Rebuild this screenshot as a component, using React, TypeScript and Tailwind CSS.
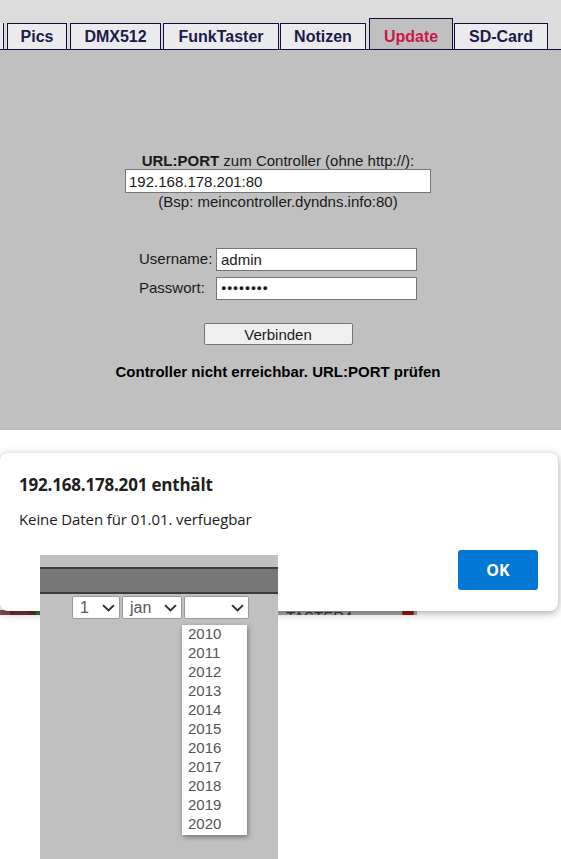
import React from "react";

const tabs = [
  { label: "Pics", w: 60, ml: 3 },
  { label: "DMX512", w: 91, ml: 3 },
  { label: "FunkTaster", w: 116, ml: 2 },
  { label: "Notizen", w: 86, ml: 1 },
  { label: "Update", w: 84, ml: 3, active: true },
  { label: "SD-Card", w: 94, ml: 1 },
];

const years = ["2010", "2011", "2012", "2013", "2014", "2015", "2016", "2017", "2018", "2019", "2020"];

function Chevron() {
  return (
    <svg width="13" height="8" viewBox="0 0 13 8" className="shrink-0">
      <path d="M1 1.2 L6.5 6.5 L12 1.2" fill="none" stroke="#2b2b2b" strokeWidth="1.8" />
    </svg>
  );
}

function Select({ value, w }: { value: string; w: number }) {
  return (
    <div
      className="h-[23px] bg-white border border-[#9a9a9a] rounded-[2px] flex items-center justify-between pl-[7px] pr-[4px] text-[16px] text-[#555]"
      style={{ width: w }}
    >
      <span className="leading-none">{value}</span>
      <Chevron />
    </div>
  );
}

export default function App() {
  return (
    <div className="relative w-[561px] h-[859px] overflow-hidden bg-white" style={{ fontFamily: '"Liberation Sans", Arial, sans-serif' }}>
      {/* Tab bar */}
      <div className="h-[50px] bg-[#dcdcdc] border-b border-[#10103a] flex items-end">
        <div className="w-[4px] h-[26px] bg-[#ebebee] border-r border-[#10103a]" />
        {tabs.map((t) => (
          <div
            key={t.label}
            className={
              t.active
                ? "h-[31px] bg-[#c0c0c0] border border-b-0 border-[#10103a] flex items-center justify-center pt-[5px] text-[16px] leading-[18px] font-bold text-[#c8174a]"
                : "h-[26px] bg-[#ebebee] border border-b-0 border-[#10103a] flex items-center justify-center text-[16px] leading-[18px] font-bold text-[#1b1b4b]"
            }
            style={{ width: t.w, marginLeft: t.ml }}
          >
            {t.label}
          </div>
        ))}
      </div>

      {/* Form */}
      <div className="h-[380px] bg-[#c0c0c0] flex flex-col items-center pt-[102px] pr-[5px] text-[15px] text-[#1a1a1a]">
        <div className="leading-[17px]">
          <b>URL:PORT</b> zum Controller (ohne http://):
        </div>
        <div className="w-[306px] h-[24px] bg-white border border-[#767676] flex items-center px-[3px] leading-none">
          192.168.178.201:80
        </div>
        <div className="leading-[17px]">(Bsp: meincontroller.dyndns.info:80)</div>

        <div className="mt-[38px] flex flex-col gap-[6px] w-[278px]">
          <div className="flex items-center">
            <span className="w-[77px]">Username:</span>
            <div className="w-[201px] h-[23px] bg-white border border-[#767676] flex items-center px-[4px] leading-none">admin</div>
          </div>
          <div className="flex items-center">
            <span className="w-[77px]">Passwort:</span>
            <div className="w-[201px] h-[23px] bg-white border border-[#767676] flex items-center px-[4px] leading-none text-[9px] tracking-[0.5px]">
              ●●●●●●●●
            </div>
          </div>
        </div>

        <div className="mt-[23px] w-[149px] h-[22px] bg-[#efefef] border border-[#767676] rounded-[2px] flex items-center justify-center leading-none">
          Verbinden
        </div>

        <div className="mt-[18px] font-bold leading-[17px] text-black">Controller nicht erreichbar. URL:PORT prüfen</div>
      </div>

      {/* underlying page strip */}
      <div className="mt-[180px] h-[5px] flex overflow-hidden">
        <div className="w-[36px] h-full bg-[#6a2a2a] flex gap-[4px]">
          <div className="w-[10px] bg-[#8a4a4a]" />
          <div className="w-[14px] bg-[#7a3030]" />
        </div>
        <div className="w-[4px] h-full bg-[#1a8a1a]" />
        <div className="w-[238px]" />
        <div className="w-[139px] h-full bg-[#a8a8a8] relative overflow-hidden">
          <span className="absolute left-[8px] top-[-1px] text-[15px] leading-none text-[#333]">TASTER4</span>
          <div className="absolute left-[124px] top-0 w-[12px] h-full bg-[#a01010] border-x border-[#555]" />
        </div>
      </div>

      {/* Alert dialog */}
      <div
        className="absolute left-0 top-[453px] w-[558px] h-[158px] bg-white rounded-[8px] shadow-[0_2px_8px_rgba(0,0,0,0.35)] flex flex-col px-[19px]"
        style={{ fontFamily: '"Open Sans", "Noto Sans", sans-serif' }}
      >
        <div className="mt-[20px] text-[17px] font-bold text-[#202020] leading-[24px] tracking-[-0.2px]">192.168.178.201 enthält</div>
        <div className="mt-[12px] text-[15px] text-[#202020] leading-[20px] tracking-[-0.1px]">Keine Daten für 01.01. verfuegbar</div>
        <div className="flex justify-end mt-[21px] pr-[1px]">
          <div className="w-[80px] h-[40px] bg-[#0078d4] rounded-[3px] flex items-center justify-center text-white font-bold text-[16px]">
            OK
          </div>
        </div>
      </div>

      {/* Composite overlay screenshot */}
      <div className="absolute left-[40px] top-[555px] w-[238px] h-[304px] bg-[#c0c0c0] flex flex-col" style={{ fontFamily: '"Liberation Sans", Arial, sans-serif' }}>
        <div className="h-[14px] border-b-2 border-[#3c3c3c]" />
        <div className="h-[25px] bg-[#777777] border-b-2 border-[#3c3c3c]" />
        <div className="relative">
          <div className="flex gap-[2px] pl-[32px] pt-[2px]">
            <Select value="1" w={48} />
            <Select value="jan" w={60} />
            <Select value="" w={65} />
          </div>
          <div className="absolute left-[142px] top-[31px] w-[65px] bg-white shadow-[1px_2px_5px_rgba(0,0,0,0.4)] flex flex-col pb-[1px]">
            {years.map((y) => (
              <div key={y} className="h-[19px] pl-[6px] flex items-center text-[15px] text-[#555]">
                {y}
              </div>
            ))}
          </div>
        </div>
      </div>
    </div>
  );
}
